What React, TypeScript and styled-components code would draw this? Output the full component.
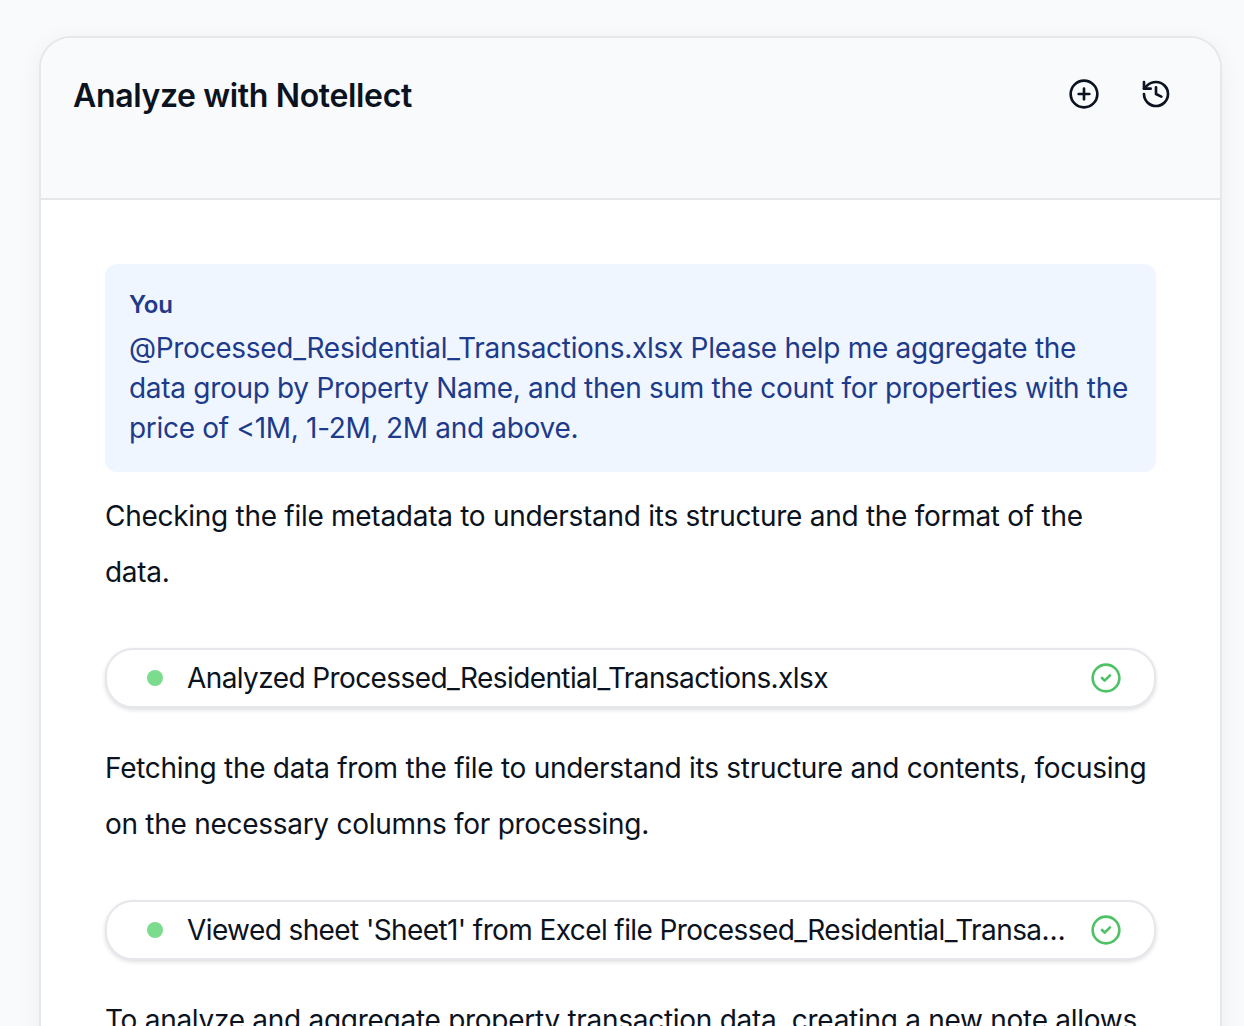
import { CircleCheck, CirclePlus, History } from 'lucide-react';
import styled, { createGlobalStyle } from 'styled-components';

const GlobalStyle = createGlobalStyle`
  html,
  body {
    margin: 0;
    height: 1026px;
    overflow: hidden;
    background: #f9fafb;
    font-family: Inter, "Liberation Sans", sans-serif;
    color: #0f172a;
  }
`;

const Page = styled.div`
  padding: 36px 22px 0 39px;
`;

const Card = styled.section`
  border: 2px solid #e5e7eb;
  border-bottom: 0;
  border-radius: 32px 32px 0 0;
  background: #fff;
  box-shadow: 0 4px 24px rgba(17, 24, 39, 0.05);
  overflow: hidden;
`;

const Header = styled.header`
  display: flex;
  justify-content: space-between;
  align-items: flex-start;
  height: 162px;
  padding: 38px 48px 0 32px;
  box-sizing: border-box;
  background: #f9fafb;
  border-bottom: 2px solid #e5e7eb;
`;

const Title = styled.h1`
  margin: 0;
  font-size: 32px;
  line-height: 40px;
  font-weight: 600;
  letter-spacing: -0.36px;
  color: #0b1220;
`;

const Actions = styled.div`
  display: flex;
  gap: 40px;
  margin-top: 2px;
`;

const IconButton = styled.button`
  display: flex;
  padding: 0;
  border: 0;
  background: none;
  color: #0b1220;
`;

const Body = styled.div`
  padding: 64px 64px 0;
`;

const Bubble = styled.div`
  margin-bottom: 16px;
  padding: 24px;
  border-radius: 12px;
  background: #eff6ff;
  color: #1e3a8a;
  font-size: 28px;
  line-height: 40px;
  letter-spacing: -0.3px;
`;

const Sender = styled.div`
  margin-bottom: 4px;
  padding-bottom: 2px;
  font-size: 24px;
  line-height: 34px;
  font-weight: 600;
  letter-spacing: 0;
`;

const Paragraph = styled.p`
  margin: 0 0 48px;
  padding-right: 3px;
  font-size: 28px;
  line-height: 56px;
  letter-spacing: -0.28px;
  color: #0b1220;
`;

const Step = styled.div`
  display: flex;
  align-items: center;
  height: 60px;
  margin-bottom: 32px;
  padding: 0 32px;
  box-sizing: border-box;
  border: 2px solid #e5e7eb;
  border-radius: 28px;
  background: #fff;
  box-shadow: 0 2px 4px rgba(17, 24, 39, 0.14);
`;

const Dot = styled.span`
  flex: none;
  width: 16px;
  height: 16px;
  margin: 0 24px 0 8px;
  border-radius: 50%;
  background: #7bdc8d;
`;

const StepLabel = styled.span`
  flex: 1;
  min-width: 0;
  overflow: hidden;
  white-space: nowrap;
  text-overflow: ellipsis;
  font-size: 28px;
  letter-spacing: -0.6px;
  color: #0b1220;
`;

const StepStatus = styled.span`
  display: flex;
  flex: none;
  margin-left: 24px;
  color: #4fc268;
`;

const steps = [
  {
    text: 'Checking the file metadata to understand its structure and the format of the data.',
    label: 'Analyzed Processed_Residential_Transactions.xlsx',
  },
  {
    text: 'Fetching the data from the file to understand its structure and contents, focusing on the necessary columns for processing.',
    label: "Viewed sheet 'Sheet1' from Excel file Processed_Residential_Transactions.xlsx",
  },
];

const App = () => (
  <Page>
    <GlobalStyle />
    <Card>
      <Header>
        <Title>Analyze with Notellect</Title>
        <Actions>
          <IconButton type="button" aria-label="New chat">
            <CirclePlus size={32} strokeWidth={2} />
          </IconButton>
          <IconButton type="button" aria-label="History">
            <History size={32} strokeWidth={2} />
          </IconButton>
        </Actions>
      </Header>
      <Body>
        <Bubble>
          <Sender>You</Sender>
          @Processed_Residential_Transactions.xlsx Please help me aggregate the data group by
          Property Name, and then sum the count for properties with the price of &lt;1M, 1-2M, 2M
          and above.
        </Bubble>
        {steps.map((step) => (
          <div key={step.label}>
            <Paragraph>{step.text}</Paragraph>
            <Step>
              <Dot />
              <StepLabel>{step.label}</StepLabel>
              <StepStatus>
                <CircleCheck size={32} strokeWidth={2} />
              </StepStatus>
            </Step>
          </div>
        ))}
        <Paragraph>
          To analyze and aggregate property transaction data, creating a new note allows
        </Paragraph>
      </Body>
    </Card>
  </Page>
);

export default App;
